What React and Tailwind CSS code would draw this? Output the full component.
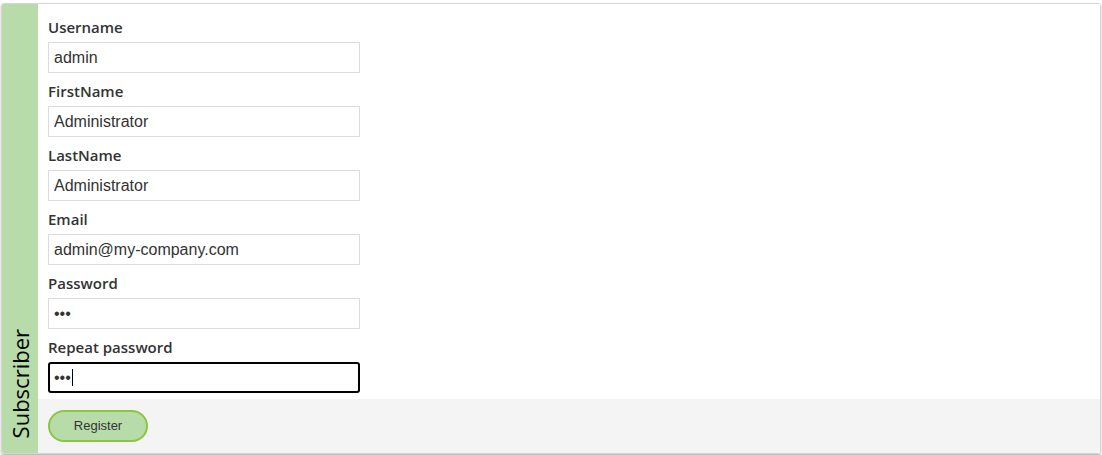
import React from "react";

const fields = [
	{ label: "Username", value: "admin" },
	{ label: "FirstName", value: "Administrator" },
	{ label: "LastName", value: "Administrator" },
	{ label: "Email", value: "admin@my-company.com" },
	{ label: "Password", value: "•••" },
];

const App = () => {
	return (
		<div className="w-[1102px] h-[455px] bg-white pt-[3px] px-[1px] pb-[1px] font-['Open_Sans',sans-serif]">
			<div className="flex h-full rounded-[3px] overflow-hidden border border-[#d6d6d6] shadow-[0_1px_2px_rgba(0,0,0,0.35)]">
				{/* side bar */}
				<div className="w-[36px] shrink-0 bg-[#b7dcaa] flex flex-col justify-end items-center pb-[15px]">
					<span className="[writing-mode:vertical-rl] rotate-180 text-[22px] leading-none text-black">
						Subscriber
					</span>
				</div>
				<div className="flex-1 flex flex-col bg-white">
					<div className="px-[10px] pt-[13px] pb-[6px]">
						{fields.map((f) => (
							<div key={f.label} className="mb-[8px]">
								<div className="text-[15px] leading-[20px] font-semibold text-[#333] mb-[5px]">
									{f.label}
								</div>
								<div className="w-[312px] h-[31px] border border-[#dcdcdc] flex items-center px-[5px] font-['Liberation_Sans',Arial,sans-serif] text-[16px] text-[#333]">
									{f.value}
								</div>
							</div>
						))}
						<div>
							<div className="text-[15px] leading-[20px] font-semibold text-[#333] mb-[5px]">
								Repeat password
							</div>
							<div className="w-[312px] h-[31px] border-2 border-black rounded-[3px] flex items-center px-[4px] font-['Liberation_Sans',Arial,sans-serif] text-[16px] text-[#333]">
								•••
								<span className="inline-block w-[1px] h-[17px] bg-black ml-[1px]" />
							</div>
						</div>
					</div>
					<div className="flex-1 bg-[#f4f4f4] px-[10px] pt-[11px]">
						<button className="w-[100px] h-[32px] rounded-full bg-[#b7dcaa] border-2 border-[#8cc63f] text-[13px] text-[#333] font-['Liberation_Sans',Arial,sans-serif]">
							Register
						</button>
					</div>
				</div>
			</div>
		</div>
	);
};

export default App;
